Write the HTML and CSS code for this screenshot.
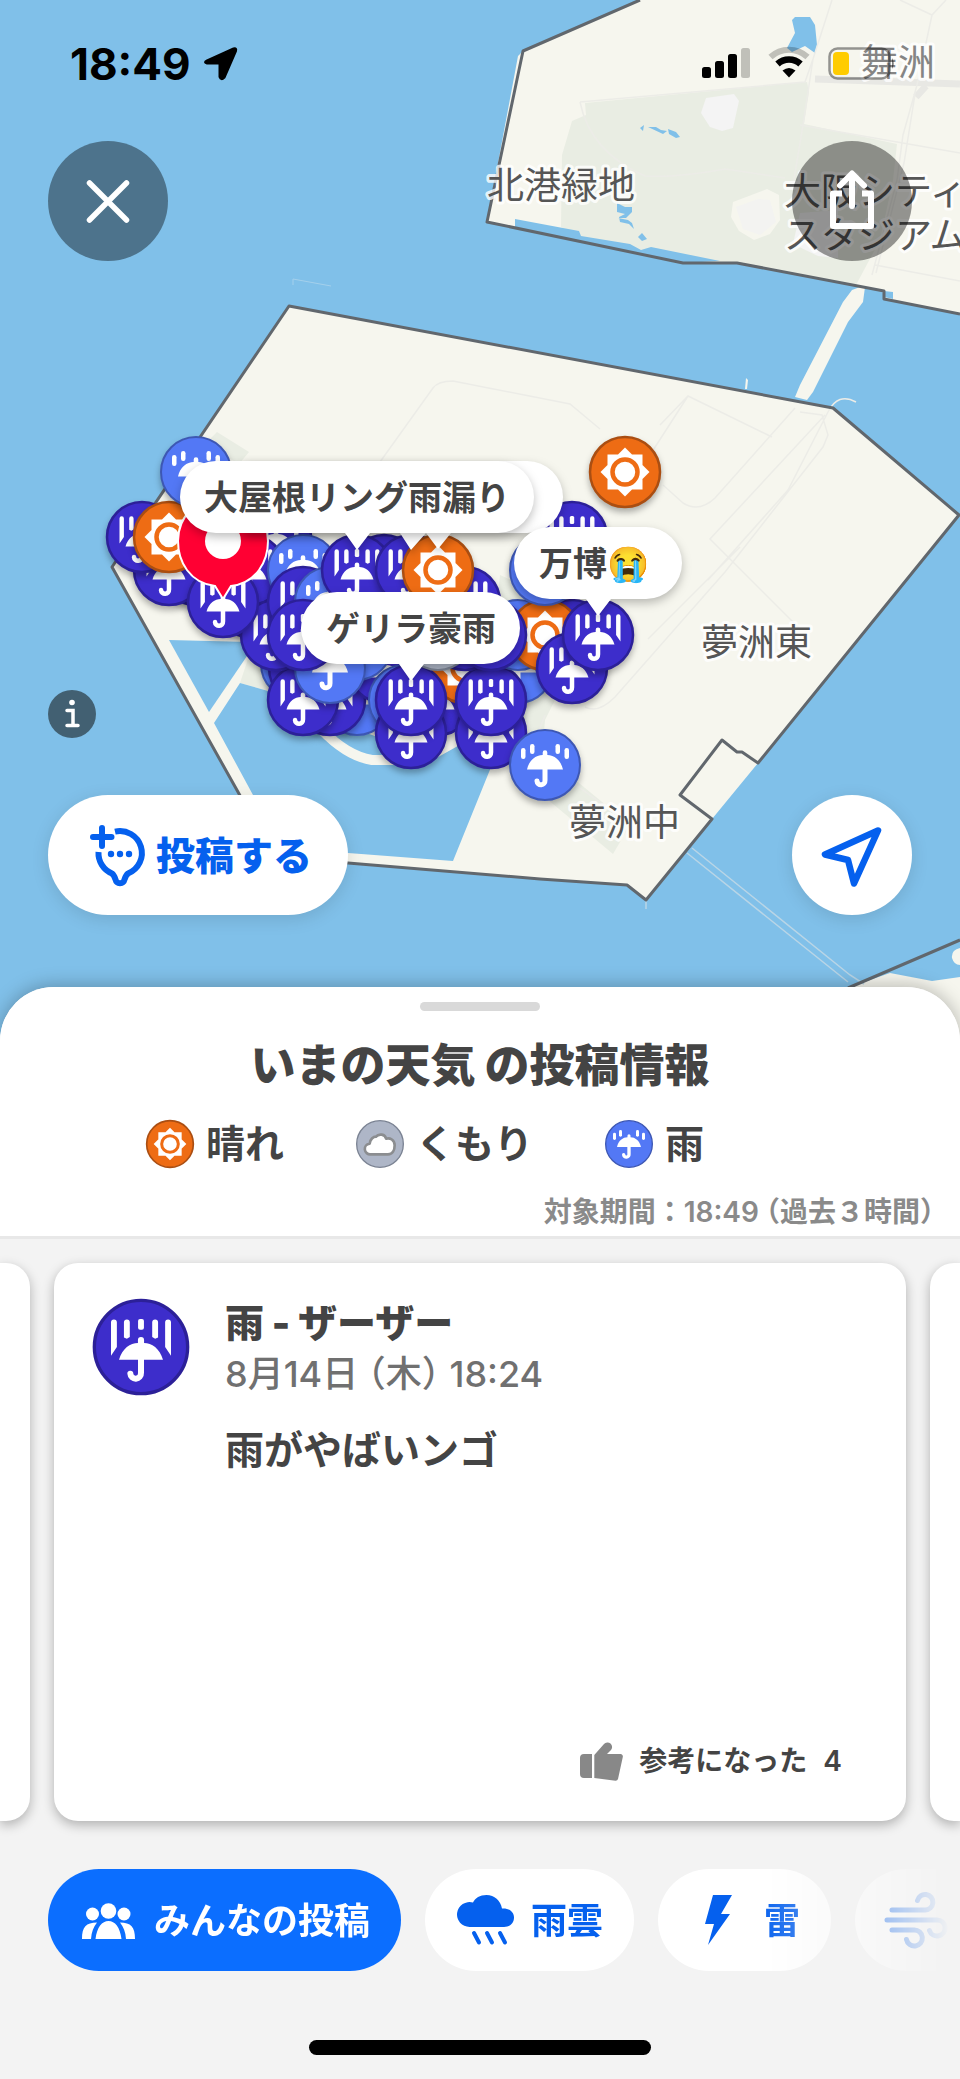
FILE: index.html
```html
<!DOCTYPE html>
<html lang="ja">
<head>
<meta charset="utf-8">
<meta name="viewport" content="width=device-width, initial-scale=1">
<title>いまの天気 の投稿情報</title>
<link rel="stylesheet" href="styles.css">
</head>
<body>
<svg class="defs" aria-hidden="true">
  <symbol id="pour" viewBox="-36 -36 72 72" overflow="visible">
    <circle r="35" fill="#3d2dcb" stroke="#2c2098" stroke-width="2.5"/>
    <g fill="#fff">
      <path d="M-22.500-18.500a2.200 2.200 0 0 1 4.400 0V0l-4.400 6.500zM22.500-18.500a2.200 2.200 0 0 0-4.400 0V0l4.400 6.500z"/>
      <path d="M-12.800-18.500a2.200 2.200 0 0 1 4.400 0v11l-2.200 1.300-2.200-1zM12.800-18.500a2.200 2.200 0 0 0-4.400 0v11l2.200 1.300 2.200-1z"/>
      <rect x="-2.200" y="-21" width="4.400" height="8" rx="1.500"/>
      <path d="M-16.500 9.500C-14 1-8-3-2.300-3v-2.200a2.300 2.300 0 0 1 4.600 0V-3C8-3 14 1 16.500 9.500z"/>
    </g>
    <path d="M0 8v11.500a4 4 0 0 1-8 0.500" fill="none" stroke="#fff" stroke-width="4.500" stroke-linecap="round"/>
  </symbol>
  <symbol id="rain" viewBox="-36 -36 72 72" overflow="visible">
    <circle r="35" fill="#5378f5" stroke="#3d57b3" stroke-width="2"/>
    <g fill="#fff">
      <rect x="-24" y="-17" width="4.500" height="11" rx="2.200"/>
      <rect x="-15" y="-21" width="4.500" height="10" rx="2.200"/>
      <rect x="10.500" y="-21" width="4.500" height="10" rx="2.200"/>
      <rect x="19.500" y="-17" width="4.500" height="11" rx="2.200"/>
      <path d="M-18 4.500C-16-5-9-10-2.300-10v-2.500a2.300 2.300 0 0 1 4.600 0v2.500C9-10 16-5 18 4.500z"/>
    </g>
    <path d="M0 3v12.500a4 4 0 0 1-8 0.500" fill="none" stroke="#fff" stroke-width="5" stroke-linecap="round"/>
  </symbol>
  <symbol id="sun" viewBox="-36 -36 72 72" overflow="visible">
    <circle r="35" fill="#ee6c14" stroke="#aa4e12" stroke-width="2.500"/>
    <path d="M-17.500-17.500h35v35h-35zM0-24.500L24.500 0 0 24.500-24.500 0z" fill="#fff"/>
    <circle r="12.500" fill="#fff" stroke="#ee6c14" stroke-width="4.500"/>
  </symbol>
  <symbol id="cloud" viewBox="-36 -36 72 72" overflow="visible">
    <circle r="35" fill="#aeb6c7" stroke="#7b8393" stroke-width="2"/>
    <path d="M-14 14.500a8 8 0 0 1-1.500-16C-15-8-10-12-6-12-2-17 8-16 9-9c6-2 13 2 13 10 0 7-3 13.500-10 13.500z" transform="translate(0 1)" fill="#fff" stroke="#8b8d90" stroke-width="4" stroke-linejoin="round"/>
  </symbol>
</svg>

<main class="screen">
  <section class="map" aria-label="地図">
    <svg class="map-canvas" viewBox="0 0 960 1060">
      <rect width="960" height="1060" fill="#80c0e9"/>
      <path class="land" d="M640 0L523 51 518 56 487 222 683 263h54l147 28v8l76 15V0z"/>
      <path class="park" d="M585 103l222-21 2 10-5 32 93 20-4 36-13 60-24 45-119-22h-50l-105-26-21-10 1-72 10-34 14-6z"/>
      <g class="water">
        <path d="M515 219l64 12 2 5 49 8 11 6 10-3 69 14-37 2-168-36z"/>
        <path d="M795 17l15 0 5 8 2 20-2 8-10-7-13 6-5-4 8-15-3-13zM640 128l4-3-1 6zM648 127l8 0 5 3 6 1-4 3zM668 129l8 3 4 5-4 1-7-4zM617 203l8 4 7 0 0 5-6 6-8 0 10 2 4 3 2 6-5-5-9-2-1-5 6-3-8-2zM638 237l4-4 5 6-5 2zM884 291l9 1v7l-9-2z"/>
      </g>
      <path fill="#f4f4f4" d="M706 98l28-4 5 7-6 27-11 3-12-4-9-14zM800 213l38-3 0 48-20-2-25-12z"/>
      <path class="land" d="M733 202l34-13 12 6 1 25-10 14-16 6-15-9-8-14z"/>
      <path fill="#f3f3f1" d="M736 207l22-8 12 1 6 22-16 13-17-6z"/>
      <path d="M815 79l145 5M916 97l10-11" fill="none" stroke="#e8e8e4" stroke-width="7"/>
      <path class="land" d="M860 287h5l-2 15-6 8-9 12-35 70-6 8-12-3 5-12 43-83 9-12z"/>
      <path class="land" d="M289 306l544 102 126 107-201 248-46 56-66 81-19-15-87-6-192-16-73-5-163-291z"/>
      <g class="park">
        <path d="M217 432l32 20-10 12-34-20zM240 683l10-30 30 0-12 38zM500 575l45 20 10 105-10 20-3 35-60-5zM545 755l85 70-17 29-90-75z"/>
      </g>
      <g class="roads">
        <path d="M580 102l225-20 8-23 19-59M580 102q10 50 65 74 30 2 80-7l60 9M813 59l-10 66-10 60M900 0l32 15 14-15M932 15l-15 70-14 50-6 45-25 95M916 88l-12 75-28 110M800 125l160 28M875 265l85 16M380 462l53-74q5-7 20-7l117 23 30 25M660 425l28-29 84 41M688 396l-58 90M856 402q-18-10-28 10l-40 78-80 90M795 408l-80 90q-16 15-32 5l-20-18M825 415l-115 124 90 90M800 412l22 3 6 20-5 12-98 125-110 125q-17 17-30 10M740 547l-92 92M545 715l-8 20 10 30 60 42"/>
      </g>
      <g class="water">
        <path d="M169 640l81 2-3 14-38 56z"/>
        <path d="M214 723l26-40 28 8 62 29 70 25 57 0 45-5-49 121-105-8-60-3-35-55z"/>
      </g>
      <path d="M322 730q25 26 50 30h33l30-7 45-25" fill="none" stroke="#f6f6ee" stroke-width="10"/>
      <path class="land" d="M850 987l40-14 42 8 28-4v83H850zM960 948q-9 2-8 10 2 7 8 7zM746 378l2 2-1 9-2 0z"/>
      <g fill="none" stroke="#b9d5e6" stroke-width="1.500">
        <path d="M692 848l158 127 14 9M687 853l161 129M646 900v9"/>
      </g>
      <path d="M293 285v-6l38 7" fill="none" stroke="#a4d0ec" stroke-width="1"/>
      <g class="border">
        <path d="M640 0L523 51 487 222 683 263h54l147 28v8l76 15"/>
        <path d="M758 763l201-248-126-107-544-102-177 261 163 291 73 5 192 16 87 6 19 15 66-81-32-24 42-55 15 12h5z"/>
        <path d="M848 988l112-48"/>
      </g>
      <g class="places">
        <text x="487" y="199">北港緑地</text>
        <text x="784" y="205">大阪シティ</text>
        <text x="784" y="249">スタジアム</text>
        <text class="pale" x="861" y="76">舞洲</text>
        <text x="701" y="656">夢洲東</text>
        <text x="569" y="836">夢洲中</text>
      </g>

      <g class="pins">
        <use href="#rain" x="260" y="628" width="72" height="72"/>
        <use href="#pour" x="268" y="632" width="72" height="72"/>
        <use href="#rain" x="321" y="664" width="72" height="72"/>
        <use href="#pour" x="294" y="664" width="72" height="72"/>
        <use href="#pour" x="348" y="632" width="72" height="72"/>
        <use href="#rain" x="368" y="664" width="72" height="72"/>
        <use href="#rain" x="321" y="609" width="72" height="72"/>
        <use href="#pour" x="267" y="664" width="72" height="72"/>
        <use href="#rain" x="294" y="632" width="72" height="72"/>
        <use href="#rain" x="482" y="632" width="72" height="72"/>
        <use href="#pour" x="402" y="664" width="72" height="72"/>
        <use href="#sun" x="429" y="632" width="72" height="72"/>
        <use href="#pour" x="375" y="697" width="72" height="72"/>
        <use href="#pour" x="455" y="697" width="72" height="72"/>
        <use href="#pour" x="375" y="664" width="72" height="72"/>
        <use href="#pour" x="455" y="664" width="72" height="72"/>
        <use href="#pour" x="429" y="599" width="72" height="72"/>
        <use href="#cloud" x="402" y="599" width="72" height="72"/>
        <use href="#pour" x="240" y="501" width="72" height="72"/>
        <use href="#pour" x="214" y="566" width="72" height="72"/>
        <use href="#pour" x="214" y="534" width="72" height="72"/>
        <use href="#rain" x="267" y="534" width="72" height="72"/>
        <use href="#pour" x="240" y="599" width="72" height="72"/>
        <use href="#pour" x="267" y="566" width="72" height="72"/>
        <use href="#rain" x="294" y="566" width="72" height="72"/>
        <use href="#pour" x="267" y="599" width="72" height="72"/>
        <use href="#pour" x="348" y="534" width="72" height="72"/>
        <use href="#pour" x="321" y="534" width="72" height="72"/>
        <use href="#pour" x="375" y="534" width="72" height="72"/>
        <use href="#pour" x="429" y="566" width="72" height="72"/>
        <use href="#sun" x="402" y="534" width="72" height="72"/>
        <use href="#rain" x="482" y="599" width="72" height="72"/>
        <use href="#pour" x="536" y="599" width="72" height="72"/>
        <use href="#sun" x="509" y="599" width="72" height="72"/>
        <use href="#pour" x="455" y="599" width="72" height="72"/>
        <use href="#pour" x="536" y="632" width="72" height="72"/>
        <use href="#pour" x="562" y="599" width="72" height="72"/>
        <use href="#pour" x="536" y="501" width="72" height="72"/>
        <use href="#rain" x="509" y="534" width="72" height="72"/>
        <use href="#rain" x="509" y="729" width="72" height="72"/>
        <use href="#sun" x="589" y="436" width="72" height="72"/>
        <use href="#pour" x="160" y="534" width="72" height="72"/>
        <use href="#pour" x="133" y="534" width="72" height="72"/>
        <use href="#pour" x="106" y="501" width="72" height="72"/>
        <use href="#sun" x="133" y="501" width="72" height="72"/>
        <use href="#rain" x="160" y="436" width="72" height="72"/>
        <use href="#pour" x="187" y="566" width="72" height="72"/>
      </g>
      <path d="M223 599L215 586C190 583 178 562 178 541a45 45 0 0 1 90 0c0 21-12 42-37 45z" fill="#ff0033" stroke="#fff" stroke-width="2"/>
      <circle cx="223" cy="541" r="18" fill="#fff"/>

      <g class="bubbles">
        <path d="M245 461H527a36 36 0 0 1 0 72H451L438 549 426 533 411 550 400 533H245z"/>
        <path d="M216 461H498a36 36 0 0 1 0 72H370L357 550 345 533H216a36 36 0 0 1 0-72z"/>
        <path d="M337 592H484a36 36 0 0 1 0 72H424L411 681 399 664H337a36 36 0 0 1 0-72z"/>
        <path d="M550 527h96a36 36 0 0 1 0 72H611L598 616 586 599H550a36 36 0 0 1 0-72z"/>
      </g>
      <g class="bubble-text">
        <text x="204" y="510">大屋根リング雨漏り</text>
        <text x="326" y="641">ゲリラ豪雨</text>
        <text x="539" y="576">万博<tspan class="emoji">😭</tspan></text>
      </g>
    </svg>

    <header class="status">
      <time class="clock">18:49</time>
      <svg class="here" width="36" height="36" viewBox="0 0 36 36"><path d="M4 14.500L30.500 2.500q3.500-1 2.500 2.500L21.500 31.500q-3.500 3.500-5-0.500V17.500H4q-4-1 0-3z" stroke="#000" stroke-width="2" stroke-linejoin="round"/></svg>
      <svg class="signals" width="200" height="36" viewBox="0 0 200 36">
        <g><rect x="2" y="21" width="9" height="11" rx="2.500"/><rect x="15" y="15" width="9" height="17" rx="2.500"/><rect x="28" y="8" width="9" height="24" rx="2.500"/><rect x="41" y="2" width="9" height="30" rx="2.500" fill-opacity=".22"/></g>
        <path d="M70.500 11a27 27 0 0 1 37 0" fill="none" stroke="#000" stroke-opacity=".22" stroke-width="6"/>
        <path d="M77.500 18a17 17 0 0 1 23 0" fill="none" stroke="#000" stroke-width="6.500"/>
        <path d="M82.500 24.500q6.500-5 13 0L89 31.500z"/>
        <rect x="129.500" y="2.500" width="60" height="30" rx="8" fill="none" stroke="#000" stroke-opacity=".4" stroke-width="2.500"/>
        <path d="M192 12q3.500 5.500 0 11z" fill-opacity=".5"/>
        <rect x="133" y="6" width="16" height="23" rx="4" fill="#ffcc00"/>
      </svg>
    </header>

    <button class="round dim top-left" type="button" aria-label="閉じる">
      <svg width="60" height="60" viewBox="0 0 60 60"><path d="M11.500 12l37 37M48.500 12l-37 37" stroke="#fff" stroke-width="5.500" stroke-linecap="round"/></svg>
    </button>
    <button class="round dim top-right" type="button" aria-label="共有">
      <svg width="60" height="66" viewBox="0 0 60 66" fill="none" stroke="#fff" stroke-width="6" stroke-linejoin="round"><path d="M20 25.500H11V58h38V25.500h-9"/><path d="M30 38V7M18 17.500L30 5.500l12 12" stroke-linecap="round"/></svg>
    </button>
    <button class="info" type="button" aria-label="情報">
      <svg width="48" height="48" viewBox="0 0 48 48" fill="none" stroke="#fff" stroke-width="3.500" stroke-linecap="round"><path d="M19 20.500h6V35M19 35.500h11"/><circle cx="24" cy="12.500" r="2.800" fill="#fff" stroke="none"/></svg>
    </button>
    <button class="post" type="button">
      <svg width="54" height="61" viewBox="0 0 54 61" fill="none" stroke="#0560ee" stroke-width="6"><path d="M12 3v18M3 12h18.500" stroke-linecap="round"/><path d="M25 6.600A22 22 0 0 1 38 48.500Q36 50 34.500 54.500a4.600 4.600 0 0 1-9 0Q24 50 22 48.500A22 22 0 0 1 8.500 27" stroke-linejoin="round"/><g fill="#0560ee" stroke="none"><circle cx="21" cy="29" r="3.200"/><circle cx="30" cy="29" r="3.200"/><circle cx="39" cy="29" r="3.200"/></g></svg>
      <span>投稿する</span>
    </button>
    <button class="round locate" type="button" aria-label="現在地">
      <svg width="60" height="60" viewBox="0 0 60 60"><path d="M56 5.500L3 29.500l23 5.500L32 58.500z" fill="none" stroke="#0560ee" stroke-width="6.500" stroke-linejoin="round"/></svg>
    </button>
  </section>

  <section class="sheet">
    <header class="sheet-head">
      <div class="handle"></div>
      <h1 class="title">いまの天気 の投稿情報</h1>
      <ul class="legend">
        <li><svg width="48" height="48"><use href="#sun"/></svg>晴れ</li>
        <li><svg width="48" height="48"><use href="#cloud"/></svg>くもり</li>
        <li><svg width="48" height="48"><use href="#rain"/></svg>雨</li>
      </ul>
      <p class="period">対象期間：18:49 <span class="tight">（</span>過去３時間<span class="tight">）</span></p>
    </header>

    <div class="carousel">
      <div class="card peek peek-left"></div>
      <article class="card post-card">
        <div class="post-main">
          <svg class="post-icon" width="96" height="96"><use href="#pour"/></svg>
          <div>
            <h2 class="post-title">雨 - ザーザー</h2>
            <p class="post-date">8月14日 <span class="tight">（</span>木<span class="tight">）</span> 18:24</p>
            <p class="post-text">雨がやばいンゴ</p>
          </div>
        </div>
        <button class="helpful" type="button">
          <svg width="43" height="39" viewBox="0 0 43 39" fill="#888"><path d="M4 12h8v24H4a4 4 0 0 1-4-4V16a4 4 0 0 1 4-4zM14.300 13L24 2a4.500 4.500 0 0 1 7 6l-4 4h13.500a2.400 2.400 0 0 1 2.300 3L38 37a2.500 2.500 0 0 1-2.500 1.700L14.300 36z"/></svg>
          <span>参考になった</span><span>4</span>
        </button>
      </article>
      <div class="card peek peek-right"></div>
    </div>

    <nav class="chips">
      <button class="chip chip-on" type="button">
        <svg width="56" height="50" viewBox="0 0 56 50" fill="#fff"><circle cx="28.500" cy="16" r="7.800"/><circle cx="12.500" cy="19" r="6.500"/><circle cx="44" cy="19" r="6.500"/><path d="M15.500 44C17 32 22 26 28.500 26S40 32 41.500 44zM2 44C2 32 6 27.500 17 27.500 13.500 32 11.500 37 11 44zM55 44C55 32 51 27.500 40 27.500 43.500 32 45.500 37 46 44z"/></svg>
        <span>みんなの投稿</span>
      </button>
      <button class="chip" type="button">
        <svg width="56" height="50" viewBox="0 0 56 50" fill="#0560ee"><path d="M12.500 32a12.500 12.500 0 1 1 3.500-24.500C18 3 23 0 29.500 0c8 0 14 5.500 15.500 13.500C52 13 57 17 57 22.500S53 32 47 32z"/><path d="M17 38l5 9.500M30 38l5 9.500M43 38l5 9.500" stroke="#0560ee" stroke-width="4" stroke-linecap="round"/></svg>
        <span>雨雲</span>
      </button>
      <button class="chip" type="button">
        <svg width="56" height="50" viewBox="0 0 56 50" fill="#0560ee"><path d="M23 0h19L31 19h9L18 50l6-21h-9z"/></svg>
        <span>雷</span>
      </button>
      <button class="chip" type="button" aria-label="風">
        <svg width="56" height="50" viewBox="0 0 56 50" fill="none" stroke="#0560ee" stroke-width="5" stroke-linecap="round"><path d="M5 15h33a7.800 7.800 0 1 0-7.500-9.500M0 25h50a8 8 0 1 1-7.500 10.500M5 35h22a8 8 0 1 1-7.500 9.500"/></svg>
      </button>
    </nav>
    <div class="home"></div>
  </section>
</main>
</body>
</html>
```

FILE: styles.css
```css
* { box-sizing: border-box; }
body {
  margin: 0;
  background: #f3f3f3;
  color: #444;
  font-family: Inter, "Noto Sans CJK JP", sans-serif;
}
h1, h2, p, ul { margin: 0; padding: 0; }
button { border: 0; padding: 0; font: inherit; color: inherit; cursor: pointer; }
svg { display: block; flex: none; overflow: visible; }
.defs { position: absolute; width: 0; height: 0; }
.screen { min-height: 100vh; overflow: hidden; }

/* map */
.map { position: relative; margin-bottom: -73px; }
.map-canvas { width: 100%; height: auto; overflow: hidden; }
.land { fill: #f6f6ee; }
.park { fill: #e9ede3; }
.water { fill: #80c0e9; }
.roads { fill: none; stroke: #ececE7; stroke-width: 1.5; }
.border { fill: none; stroke: #61676d; stroke-width: 3; stroke-linejoin: round; }
.places {
  font-size: 37px;
  fill: #565656;
  stroke: #fff;
  stroke-opacity: 0.8;
  stroke-width: 6px;
  stroke-linejoin: round;
  paint-order: stroke;
}
.places .pale { fill: #858585; }
.pins use { filter: drop-shadow(0 4px 3px rgba(0, 0, 0, 0.3)); }
.bubbles path { fill: #fff; filter: drop-shadow(0 4px 5px rgba(0, 0, 0, 0.25)); }
.bubble-text { font-size: 34px; font-weight: 600; fill: #444; }
.emoji { font-size: 34px; font-family: "Noto Color Emoji", "Apple Color Emoji", sans-serif; }

.status {
  position: absolute;
  inset: 0 0 auto;
  display: flex;
  align-items: center;
  padding: 40px 60px 0 70px;
  color: #000;
}
.clock { font-size: 44px; line-height: 48px; font-weight: 700; }
.here { margin-left: 12px; }
.signals { margin-left: auto; }

.round {
  position: absolute;
  display: grid;
  place-items: center;
  width: 120px;
  height: 120px;
  border-radius: 50%;
}
.dim { top: 141px; background: rgba(0, 0, 0, 0.4); }
.top-left { left: 48px; }
.top-right { right: 48px; }
.info {
  position: absolute;
  left: 48px;
  bottom: 322px;
  width: 48px;
  height: 48px;
  border-radius: 50%;
  background: #426072;
}
.post, .locate {
  position: absolute;
  bottom: 145px;
  background: #fff;
  box-shadow: 0 4px 18px rgba(0, 0, 0, 0.12);
}
.post {
  left: 48px;
  display: flex;
  align-items: center;
  gap: 12px;
  height: 120px;
  padding: 0 36px 0 42px;
  border-radius: 60px;
  color: #0560ee;
  font-size: 39px;
  font-weight: 800;
}
.post span, .chip span { padding-bottom: 4px; }
.locate { right: 48px; }

/* sheet */
.sheet {
  position: relative;
  padding-bottom: 24px;
  border-radius: 54px 54px 0 0;
  background: #f3f3f3;
  box-shadow: 0 -2px 18px rgba(0, 0, 0, 0.25);
}
.sheet-head {
  padding: 15px 26px 4px;
  border-radius: 54px 54px 0 0;
  border-bottom: 3px solid #e8e8e8;
  background: #fff;
}
.handle {
  width: 120px;
  height: 9px;
  margin: 0 auto 25px;
  border-radius: 5px;
  background: #d9d9d9;
}
.title { font-size: 45px; line-height: 60px; font-weight: 900; text-align: center; }
.legend {
  display: flex;
  gap: 72px;
  margin: 24px 0;
  padding-left: 120px;
  list-style: none;
  font-size: 39px;
  line-height: 48px;
  font-weight: 600;
}
.legend li { display: flex; gap: 12px; }
.period {
  color: #8a8a8a;
  font-size: 28px;
  line-height: 40px;
  font-weight: 600;
  text-align: right;
}
.tight { font-feature-settings: "halt"; }

.carousel { display: flex; gap: 24px; padding-top: 24px; }
.card {
  min-height: 558px;
  border-radius: 24px;
  background: #fff;
  box-shadow: 0 4px 12px rgba(0, 0, 0, 0.28);
}
.peek { flex: 0 0 30px; }
.peek-left { border-radius: 0 24px 24px 0; }
.peek-right { border-radius: 24px 0 0 24px; }
.post-card {
  flex: 1;
  display: flex;
  flex-direction: column;
  justify-content: space-between;
  padding: 36px 64px 40px 39px;
}
.post-main { display: flex; gap: 36px; }
.post-title { font-size: 39px; line-height: 48px; font-weight: 900; }
.post-date { margin-top: 3px; color: #707070; font-size: 36px; line-height: 48px; font-weight: 500; }
.post-text { margin-top: 28px; font-size: 39px; line-height: 48px; font-weight: 600; }
.helpful {
  display: flex;
  align-items: center;
  align-self: flex-end;
  gap: 16px;
  background: none;
  font-size: 28px;
  line-height: 40px;
  font-weight: 600;
}

.chips {
  display: flex;
  gap: 24px;
  padding: 48px 0 0 48px;
  overflow: hidden;
  -webkit-mask-image: linear-gradient(to right, #000 79%, transparent 99%);
  mask-image: linear-gradient(to right, #000 79%, transparent 99%);
}
.chip {
  flex: none;
  display: flex;
  align-items: center;
  gap: 18px;
  height: 102px;
  min-width: 172px;
  padding: 0 31px 0 32px;
  border-radius: 51px;
  background: #fff;
  color: #0560ee;
  font-size: 36px;
  font-weight: 600;
}
.chip-on { background: #0b6eff; color: #fff; }
.home {
  width: 342px;
  height: 15px;
  margin: 69px auto 0;
  border-radius: 8px;
  background: #000;
}
```
